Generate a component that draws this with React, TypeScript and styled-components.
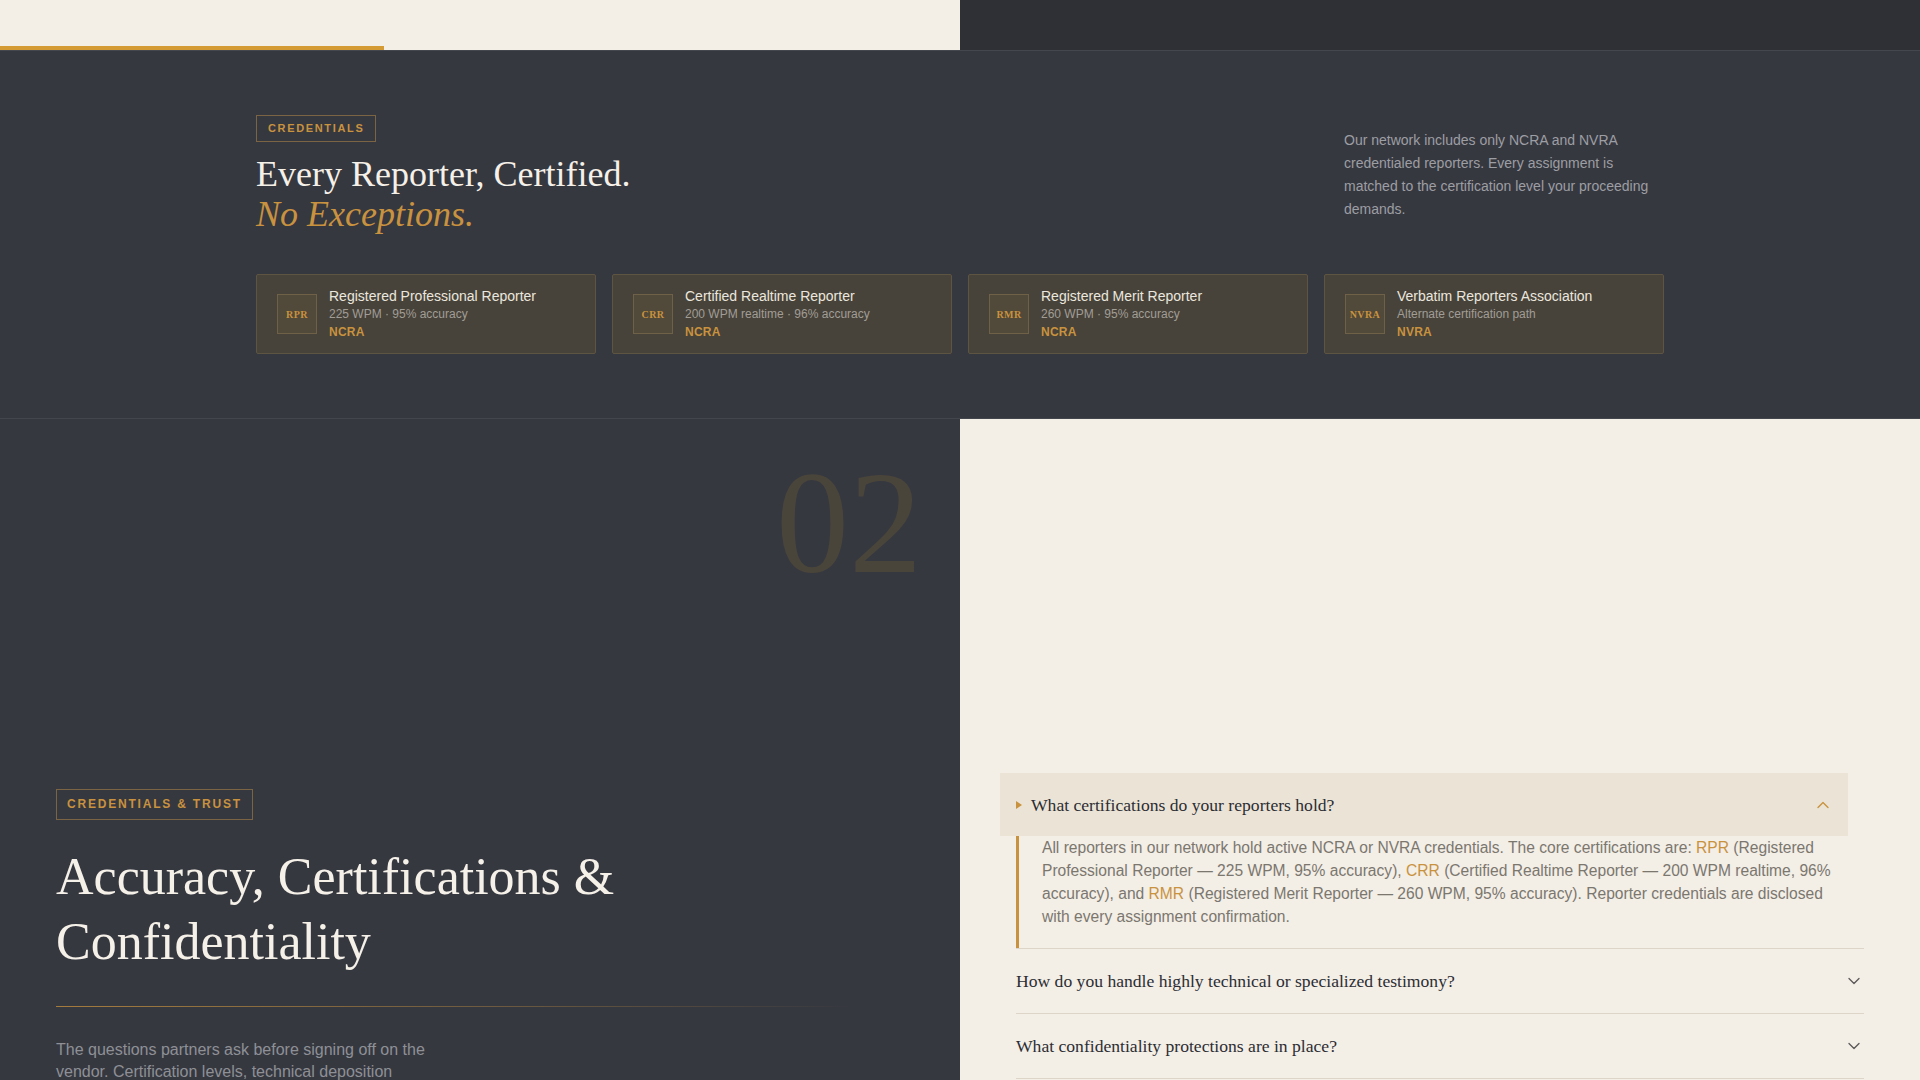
import React from "react";
import styled, { createGlobalStyle } from "styled-components";
import { ChevronDown, ChevronUp } from "lucide-react";

const GlobalStyle = createGlobalStyle`
  * { box-sizing: border-box; }
  html, body { margin: 0; padding: 0; }
  body {
    background: #f3eee6;
    font-family: "Liberation Sans", Arial, sans-serif;
    -webkit-font-smoothing: antialiased;
  }
`;

const GOLD = "#c9923e";
const DARK = "#363840";
const CREAM = "#f3eee6";

const TopStrip = styled.div`
  display: grid;
  grid-template-columns: 1fr 1fr;
  height: 50px;
`;

const StripLight = styled.div`
  background: ${CREAM};
  display: flex;
  flex-direction: column;
  justify-content: flex-end;
`;

const StripDark = styled.div`
  background: #2e3035;
`;

const ProgressBar = styled.div`
  height: 4px;
  background: #d49b35;
`;

const CredSection = styled.section`
  background: ${DARK};
  border-top: 1px solid #44474e;
  border-bottom: 1px solid #43464d;
  padding: 64px 0;
`;

const Container = styled.div`
  max-width: 1408px;
  margin: 0 auto;
`;

const HeaderRow = styled.div`
  display: flex;
  justify-content: space-between;
  align-items: center;
  margin-bottom: 40px;
`;

const Badge = styled.span<{ $size: number; $pad: string }>`
  display: inline-block;
  border: 1px solid #7a6443;
  color: ${GOLD};
  font-family: "Liberation Sans", Arial, sans-serif;
  font-weight: 700;
  font-size: ${(p) => p.$size}px;
  line-height: 1.2;
  letter-spacing: 0.15em;
  text-transform: uppercase;
  padding: ${(p) => p.$pad};
`;

const Title = styled.h2`
  margin: 12px 0 0;
  font-family: "Liberation Serif", "Times New Roman", serif;
  font-weight: 400;
  font-size: 36px;
  line-height: 40px;
  color: #f5f0e8;
`;

const TitleAccent = styled.em`
  display: block;
  color: ${GOLD};
  font-style: italic;
`;

const Lead = styled.p`
  margin: 0;
  max-width: 320px;
  font-size: 14px;
  line-height: 23px;
  color: #9d9ea3;
`;

const CardGrid = styled.div`
  display: grid;
  grid-template-columns: repeat(4, 1fr);
  gap: 16px;
`;

const Card = styled.div`
  display: flex;
  align-items: center;
  gap: 12px;
  height: 80px;
  padding: 0 20px;
  background: #47433a;
  border: 1px solid #5d5442;
  border-radius: 2px;
`;

const CertIcon = styled.div`
  flex: none;
  width: 40px;
  height: 40px;
  display: grid;
  place-items: center;
  background: #514939;
  border: 1px solid #6f6147;
  color: ${GOLD};
  font-family: "Liberation Serif", "Times New Roman", serif;
  font-weight: 700;
  font-size: 10px;
  letter-spacing: 0.04em;
`;

const CardBody = styled.div`
  display: flex;
  flex-direction: column;
`;

const CardTitle = styled.div`
  font-size: 14px;
  line-height: 19px;
  color: #ece7de;
`;

const CardMeta = styled.div`
  font-size: 12px;
  line-height: 17px;
  color: #a19d96;
`;

const CardOrg = styled.div`
  font-size: 12px;
  line-height: 18px;
  font-weight: 700;
  color: ${GOLD};
  letter-spacing: 0.02em;
`;

const FaqSection = styled.section`
  display: grid;
  grid-template-columns: 1fr 1fr;
  min-height: 661px;
`;

const LeftPanel = styled.div`
  position: relative;
  background: ${DARK};
  padding: 370px 56px 40px;
`;

const BigNumber = styled.div`
  position: absolute;
  top: 31px;
  right: 38px;
  font-family: "Liberation Serif", "Times New Roman", serif;
  font-size: 146px;
  line-height: 1;
  color: #4a453b;
  user-select: none;
`;

const PanelTitle = styled.h2`
  margin: 24px 0 0;
  max-width: 720px;
  font-family: "Liberation Serif", "Times New Roman", serif;
  font-weight: 400;
  font-size: 52px;
  line-height: 65px;
  color: #f5f0e8;
`;

const GoldRule = styled.div`
  margin-top: 32px;
  height: 1px;
  background: linear-gradient(90deg, rgba(201, 146, 62, 0.75) 0%, rgba(201, 146, 62, 0.35) 55%, rgba(201, 146, 62, 0) 94%);
`;

const PanelText = styled.p`
  margin: 32px 0 0;
  max-width: 400px;
  font-size: 16px;
  line-height: 22px;
  color: #8e9096;
`;

const RightPanel = styled.div`
  background: ${CREAM};
  padding: 354px 56px 40px;
`;

const FaqItem = styled.div`
  border-bottom: 1px solid #ddd5c7;
`;

const FaqHeader = styled.div<{ $open: boolean }>`
  display: flex;
  align-items: center;
  height: ${(p) => (p.$open ? "63px" : "64px")};
  margin: ${(p) => (p.$open ? "0 16px 0 -16px" : "0")};
  padding: ${(p) => (p.$open ? "0 15px 0 16px" : "0")};
  background: ${(p) => (p.$open ? "#ebe4d6" : "transparent")};
  cursor: pointer;
`;

const Marker = styled.span`
  width: 0;
  height: 0;
  border-left: 6px solid ${GOLD};
  border-top: 4px solid transparent;
  border-bottom: 4px solid transparent;
  margin-right: 9px;
`;

const Question = styled.span`
  font-family: "Liberation Serif", "Times New Roman", serif;
  font-size: 17.6px;
  line-height: 20px;
  color: #2b2d33;
`;

const ChevronBox = styled.span<{ $open: boolean }>`
  margin-left: auto;
  display: flex;
  color: ${(p) => (p.$open ? GOLD : "#5c5b5a")};
`;

const Answer = styled.div`
  border-left: 3px solid ${GOLD};
  padding: 0 32px 20px 23px;
  font-size: 15.6px;
  line-height: 23px;
  color: #7b776f;
`;

const Hl = styled.span`
  color: ${GOLD};
`;

const certs = [
  { code: "RPR", title: "Registered Professional Reporter", meta: "225 WPM · 95% accuracy", org: "NCRA" },
  { code: "CRR", title: "Certified Realtime Reporter", meta: "200 WPM realtime · 96% accuracy", org: "NCRA" },
  { code: "RMR", title: "Registered Merit Reporter", meta: "260 WPM · 95% accuracy", org: "NCRA" },
  { code: "NVRA", title: "Verbatim Reporters Association", meta: "Alternate certification path", org: "NVRA" },
];

const faqs = [
  { q: "What certifications do your reporters hold?", open: true },
  { q: "How do you handle highly technical or specialized testimony?", open: false },
  { q: "What confidentiality protections are in place?", open: false },
  { q: "Can you guarantee turnaround on expedited transcripts?", open: false },
];

export default function App() {
  return (
    <>
      <GlobalStyle />
      <TopStrip>
        <StripLight>
          <ProgressBar style={{ width: "40%" }} />
        </StripLight>
        <StripDark />
      </TopStrip>

      <CredSection>
        <Container>
          <HeaderRow>
            <div>
              <Badge $size={11} $pad="6px 11px">Credentials</Badge>
              <Title>
                Every Reporter, Certified.
                <TitleAccent>No Exceptions.</TitleAccent>
              </Title>
            </div>
            <Lead>
              Our network includes only NCRA and NVRA credentialed reporters. Every assignment is
              matched to the certification level your proceeding demands.
            </Lead>
          </HeaderRow>
          <CardGrid>
            {certs.map((c) => (
              <Card key={c.code}>
                <CertIcon>{c.code}</CertIcon>
                <CardBody>
                  <CardTitle>{c.title}</CardTitle>
                  <CardMeta>{c.meta}</CardMeta>
                  <CardOrg>{c.org}</CardOrg>
                </CardBody>
              </Card>
            ))}
          </CardGrid>
        </Container>
      </CredSection>

      <FaqSection>
        <LeftPanel>
          <BigNumber>02</BigNumber>
          <Badge $size={12} $pad="7px 10px">Credentials &amp; Trust</Badge>
          <PanelTitle>Accuracy, Certifications &amp; Confidentiality</PanelTitle>
          <GoldRule />
          <PanelText>
            The questions partners ask before signing off on the vendor. Certification levels,
            technical deposition handling, and the safeguards that protect every record.
          </PanelText>
        </LeftPanel>
        <RightPanel>
          {faqs.map((f) => (
            <FaqItem key={f.q}>
              <FaqHeader $open={f.open}>
                {f.open && <Marker />}
                <Question>{f.q}</Question>
                <ChevronBox $open={f.open}>
                  {f.open ? <ChevronUp size={20} strokeWidth={1.6} /> : <ChevronDown size={20} strokeWidth={1.6} />}
                </ChevronBox>
              </FaqHeader>
              {f.open && (
                <Answer>
                  All reporters in our network hold active NCRA or NVRA credentials. The core
                  certifications are: <Hl>RPR</Hl> (Registered Professional Reporter — 225 WPM, 95%
                  accuracy), <Hl>CRR</Hl> (Certified Realtime Reporter — 200 WPM realtime, 96%
                  accuracy), and <Hl>RMR</Hl> (Registered Merit Reporter — 260 WPM, 95% accuracy).
                  Reporter credentials are disclosed with every assignment confirmation.
                </Answer>
              )}
            </FaqItem>
          ))}
        </RightPanel>
      </FaqSection>
    </>
  );
}
